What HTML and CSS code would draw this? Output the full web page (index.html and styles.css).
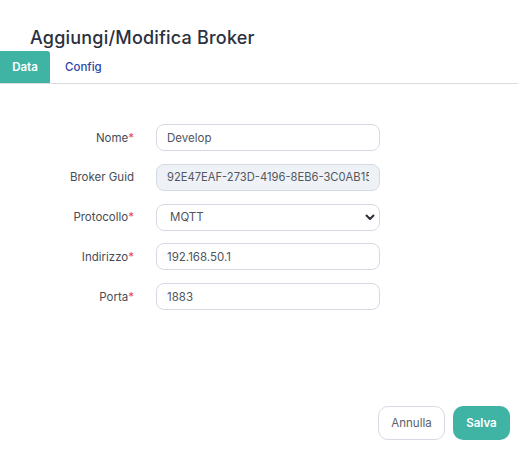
FILE: index.html
```
<!DOCTYPE html>
<html lang="it">
<head>
<meta charset="utf-8">
<link rel="stylesheet" href="styles.css">
</head>
<body>
<div class="page">
  <h1 class="title">Aggiungi/Modifica Broker</h1>
  <nav class="tabs">
    <div class="tab active">Data</div>
    <div class="tab">Config</div>
  </nav>
  <form class="form">
    <div class="row">
      <label class="label">Nome<span class="req">*</span></label>
      <input class="field" type="text" value="Develop">
    </div>
    <div class="row">
      <label class="label">Broker Guid</label>
      <input class="field disabled" type="text" value="92E47EAF-273D-4196-8EB6-3C0AB15E" disabled>
    </div>
    <div class="row">
      <label class="label">Protocollo<span class="req">*</span></label>
      <div class="select-wrap">
        <select class="field select"><option>MQTT</option></select>
        <svg class="chev" width="10" height="7" viewBox="0 0 10 7"><path d="M1.5 1.5 L5 5 L8.5 1.5" fill="none" stroke="#2b2f36" stroke-width="2" stroke-linecap="round" stroke-linejoin="round"/></svg>
      </div>
    </div>
    <div class="row">
      <label class="label">Indirizzo<span class="req">*</span></label>
      <input class="field" type="text" value="192.168.50.1">
    </div>
    <div class="row">
      <label class="label">Porta<span class="req">*</span></label>
      <input class="field" type="text" value="1883">
    </div>
  </form>
  <footer class="actions">
    <button class="btn cancel" type="button">Annulla</button>
    <button class="btn save" type="button">Salva</button>
  </footer>
</div>
</body>
</html>
```
FILE: styles.css
```
* { box-sizing: border-box; }
html, body { margin: 0; padding: 0; background: #fff; }
body { font-family: Inter, "Noto Sans", "Liberation Sans", sans-serif; color: #3a3f47; }
.page { width: 518px; height: 455px; display: flex; flex-direction: column; }
.title {
  margin: 26px 0 0 30px;
  font-size: 18px;
  font-weight: 500;
  line-height: 24px;
  color: #2a3140;
  letter-spacing: 0.2px;
}
.tabs {
  margin-top: 1px;
  display: flex;
  height: 33px;
  border-bottom: 1px solid #dcdcdc;
}
.tab {
  display: flex;
  align-items: center;
  padding: 0 15px;
  font-size: 11.5px;
  font-weight: 500;
  color: #2e46a8;
  height: 32px;
}
.tab.active {
  width: 50px;
  justify-content: center;
  padding: 0;
  background: #3fb4a5;
  color: #fff;
  font-weight: 600;
  border-top-right-radius: 3px;
}
.form {
  margin-top: 40px;
  display: flex;
  flex-direction: column;
  gap: 12.75px;
}
.row {
  display: flex;
  align-items: center;
  height: 27px;
}
.label {
  width: 134px;
  text-align: right;
  margin-right: 22px;
  font-size: 11.5px;
  color: #484d55;
}
.req { color: #e4457a; }
.field {
  width: 224px;
  height: 27px;
  border: 1px solid #d6dbe3;
  border-radius: 8px;
  padding: 0 10px;
  font-family: inherit;
  font-size: 11.5px;
  color: #50555d;
  background: #fff;
  outline: none;
}
.field.disabled { background: #eef1f6; color: #53585f; font-size: 11.2px; }
.select-wrap { position: relative; }
.select {
  appearance: none;
  -webkit-appearance: none;
  padding-left: 13px;
}
.chev { position: absolute; right: 5px; top: 10px; pointer-events: none; }
.actions {
  margin-top: auto;
  margin-bottom: 15px;
  display: flex;
  justify-content: flex-end;
  gap: 8px;
  padding-right: 8px;
}
.btn {
  height: 34px;
  border-radius: 10px;
  font-family: inherit;
  font-size: 11.5px;
  cursor: pointer;
}
.cancel {
  width: 67px;
  background: #fff;
  border: 1px solid #d6dbe3;
  color: #5b6069;
}
.save {
  width: 57px;
  background: #3fb4a5;
  border: none;
  color: #fff;
  font-weight: 600;
}
```
